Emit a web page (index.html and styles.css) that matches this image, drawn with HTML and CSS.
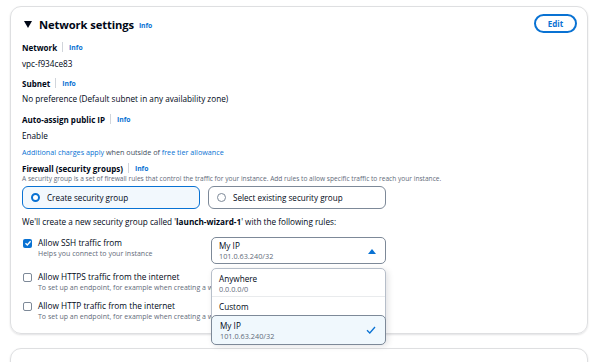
FILE: index.html
```html
<!DOCTYPE html>
<html lang="en">
<head>
  <meta charset="UTF-8" />
  <meta name="viewport" content="width=device-width, initial-scale=1.0" />
  <title>Network settings</title>
  <link rel="stylesheet" href="styles.css">
</head>
<body>
  <div class="page">
    <section class="card">
      <div class="card-head">
        <h2 class="title">
          <svg class="caret" width="8" height="7" viewBox="0 0 8 7"><path d="M0 0h8L4 7z" fill="#000716"/></svg>
          Network settings
          <a class="info info-lg">Info</a>
        </h2>
        <button class="btn-edit">Edit</button>
      </div>

      <div class="label row-network">Network <span class="sep"></span><a class="info">Info</a></div>
      <div class="value row-vpc">vpc-f934ce83</div>

      <div class="label row-subnet">Subnet <span class="sep"></span><a class="info">Info</a></div>
      <div class="value row-nopref">No preference (Default subnet in any availability zone)</div>

      <div class="label row-auto">Auto-assign public IP <span class="sep"></span><a class="info">Info</a></div>
      <div class="value row-enable">Enable</div>
      <div class="note"><a class="link">Additional charges apply</a> when outside of <a class="link">free tier allowance</a></div>

      <div class="label row-fw">Firewall (security groups) <span class="sep"></span><a class="info">Info</a></div>
      <div class="desc">A security group is a set of firewall rules that control the traffic for your instance. Add rules to allow specific traffic to reach your instance.</div>

      <div class="tiles">
        <div class="tile selected">
          <span class="radio on"></span>Create security group
        </div>
        <div class="tile">
          <span class="radio"></span>Select existing security group
        </div>
      </div>

      <div class="value row-create">We'll create a new security group called '<b>launch-wizard-1</b>' with the following rules:</div>

      <div class="rules">
        <div class="rule">
          <span class="check on">
            <svg width="8" height="8" viewBox="0 0 8 8"><path d="M1.5 4.2l1.8 1.8 3.3-3.8" fill="none" stroke="#fff" stroke-width="1.4"/></svg>
          </span>
          <div>
            <div class="rule-title">Allow SSH traffic from</div>
            <div class="hint">Helps you connect to your instance</div>
          </div>
        </div>
        <div class="select-wrap">
          <div class="select">
            <div>
              <div class="opt-title">My IP</div>
              <div class="opt-sub">101.0.63.240/32</div>
            </div>
            <svg width="8" height="6" viewBox="0 0 8 6"><path d="M0 6L4 1l4 5z" fill="#0972d3"/></svg>
          </div>
          <div class="dropdown">
            <div class="opt opt-any">
              <div class="opt-title">Anywhere</div>
              <div class="opt-sub">0.0.0.0/0</div>
            </div>
            <div class="opt opt-custom">
              <div class="opt-title">Custom</div>
            </div>
            <div class="opt opt-sel">
              <div>
                <div class="opt-title">My IP</div>
                <div class="opt-sub">101.0.63.240/32</div>
              </div>
              <svg width="10" height="8" viewBox="0 0 10 8"><path d="M1 4.2l2.8 2.8L9 1" fill="none" stroke="#0972d3" stroke-width="1.3"/></svg>
            </div>
          </div>
        </div>

        <div class="rule">
          <span class="check"></span>
          <div>
            <div class="rule-title">Allow HTTPS traffic from the internet</div>
            <div class="hint">To set up an endpoint, for example when creating a web server</div>
          </div>
        </div>
        <div></div>

        <div class="rule">
          <span class="check"></span>
          <div>
            <div class="rule-title">Allow HTTP traffic from the internet</div>
            <div class="hint">To set up an endpoint, for example when creating a web server</div>
          </div>
        </div>
        <div></div>
      </div>
    </section>

    <section class="card card-next">
      <div class="card-head">
        <h2 class="title">
          <svg class="caret" width="8" height="7" viewBox="0 0 8 7"><path d="M0 0h8L4 7z" fill="#000716"/></svg>
          Configure storage
          <a class="info info-lg">Info</a>
        </h2>
      </div>
    </section>
  </div>
</body>
</html>
```

FILE: styles.css
```css
* {
  box-sizing: border-box;
}
body {
  margin: 0;
  background: #fff;
  font-family: 'Open Sans', 'Noto Sans', sans-serif;
  color: #000716;
  font-size: 8.2px;
}

.page {
  padding: 6px 12px 0 10px;
}

.card {
  position: relative;
  border: 1px solid #dedfe1;
  border-radius: 11px;
  box-shadow: 0 1px 2px rgba(0, 7, 22, 0.12);
  padding: 6px 11px 11px 11px;
}

.card-next {
  margin-top: 14px;
  height: 40px;
  padding-top: 5px;
}

.card-head {
  height: 22px;
  display: flex;
  align-items: center;
  justify-content: space-between;
}

.title {
  margin: 0;
  display: flex;
  align-items: center;
  font-size: 11.2px;
  font-weight: 700;
  letter-spacing: -0.1px;
}

.caret {
  margin: 0 7px 0 2px;
}

.info {
  color: #0972d3;
  font-weight: 700;
  font-size: 6.8px;
}

.info-lg {
  margin-left: 5px;
  margin-top: 2px;
}

.btn-edit {
  margin-right: -1px;
  margin-top: -1px;
  width: 43px;
  height: 19px;
  border: 2px solid #0972d3;
  border-radius: 10px;
  background: #fff;
  color: #0972d3;
  font-family: inherit;
  font-weight: 700;
  font-size: 8px;
  padding: 0;
}

.label {
  display: flex;
  align-items: center;
  height: 12px;
  font-weight: 700;
  font-size: 8px;
}

.sep {
  display: inline-block;
  width: 1px;
  height: 10px;
  background: #d1d5db;
  margin: 0 6px 0 5px;
}

.value {
  height: 12px;
  line-height: 12px;
}

.row-network { margin-top: 6px; }
.row-vpc { margin-top: 5px; }
.row-subnet { margin-top: 7px; }
.row-nopref { margin-top: 4px; }
.row-auto { margin-top: 8px; }
.row-enable { margin-top: 5px; }

.note {
  margin-top: 5px;
  height: 10px;
  line-height: 10px;
  font-size: 7.2px;
  color: #414d5c;
}

.link {
  color: #0972d3;
}

.row-fw { margin-top: 5px; }

.desc {
  height: 10px;
  line-height: 10px;
  font-size: 6.6px;
  color: #5f6b7a;
  white-space: nowrap;
}

.tiles {
  margin-top: 2px;
  display: flex;
  gap: 8px;
}

.tile {
  width: 178px;
  height: 23px;
  border: 1px solid #7d8998;
  border-radius: 6px;
  display: flex;
  align-items: center;
  padding-left: 8px;
  font-size: 8.1px;
}

.tile.selected {
  border: 1.5px solid #0972d3;
  background: #f2f8fd;
}

.radio {
  width: 9px;
  height: 9px;
  border-radius: 50%;
  border: 1px solid #7d8998;
  background: #fff;
  margin-right: 7px;
}

.radio.on {
  border: 2.6px solid #0972d3;
}

.row-create {
  margin-top: 7px;
}

.rules {
  margin-top: 9px;
  display: grid;
  grid-template-columns: 189px 175px;
  row-gap: 7px;
}

.rule {
  display: flex;
  align-items: flex-start;
}

.check {
  width: 9px;
  height: 9px;
  margin: 1.5px 6px 0 1px;
  border: 1px solid #7d8998;
  border-radius: 2px;
  display: flex;
  align-items: center;
  justify-content: center;
  flex-shrink: 0;
}

.check.on {
  border: none;
  background: #0972d3;
}

.rule-title {
  height: 12px;
  line-height: 12px;
  font-size: 8.3px;
  white-space: nowrap;
}

.hint {
  height: 10px;
  line-height: 10px;
  font-size: 7px;
  color: #5f6b7a;
  white-space: nowrap;
}

.select-wrap {
  position: relative;
}

.select {
  height: 27px;
  border: 1px solid #7d8998;
  border-radius: 5px;
  display: flex;
  align-items: center;
  justify-content: space-between;
  padding: 0 9px 0 7px;
  background: #fff;
}

.opt-title {
  font-size: 8.2px;
  line-height: 11px;
}

.opt-sub {
  font-size: 7.3px;
  line-height: 10px;
  color: #5f6b7a;
}

.dropdown {
  position: absolute;
  top: 31px;
  left: 0;
  width: 175px;
  height: 76px;
  background: #fff;
  border: 1px solid #b6bec9;
  border-radius: 5px;
  box-shadow: 2px 2px 6px rgba(0, 7, 22, 0.12);
  z-index: 2;
}

.opt {
  padding: 0 7px;
}

.opt-any {
  height: 28px;
  padding-top: 4px;
  border-bottom: 1px solid #e9ebed;
}

.opt-custom {
  height: 18px;
  display: flex;
  align-items: center;
}

.opt-sel {
  margin: 0 -1px -1px -1px;
  height: 30px;
  border: 1px solid #7d8998;
  border-radius: 5px;
  background: #f0f8fd;
  display: flex;
  align-items: center;
  justify-content: space-between;
  padding: 0 9px 0 8px;
}
```
